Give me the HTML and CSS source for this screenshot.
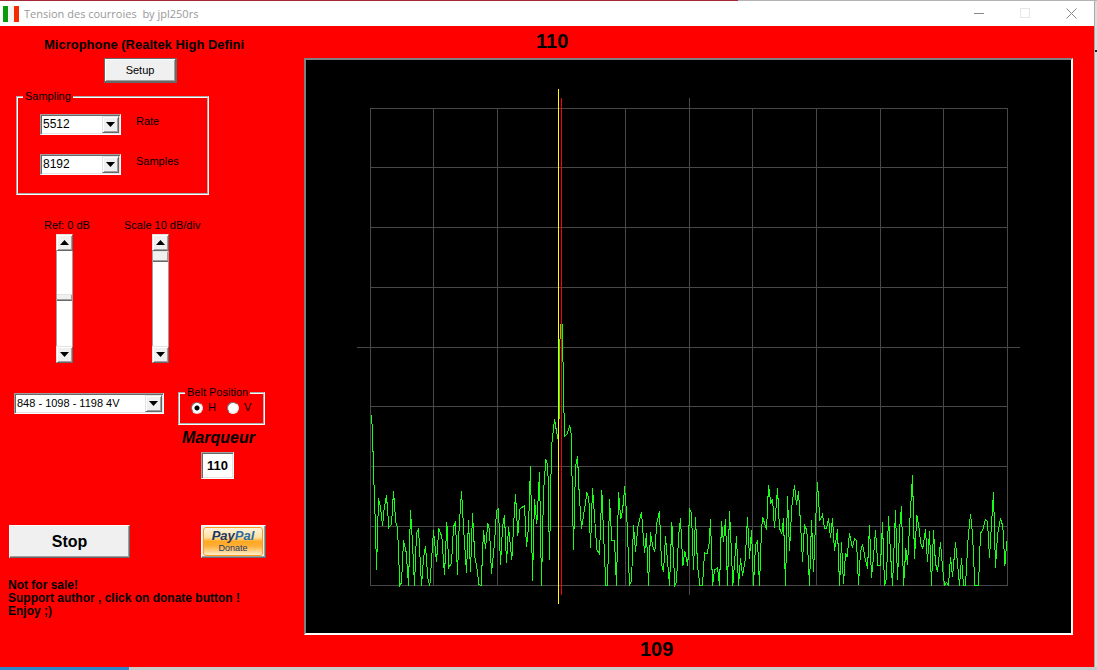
FILE: index.html
```html
<!DOCTYPE html>
<html lang="fr">
<head>
<meta charset="utf-8">
<title>Tension des courroies by jpl250rs</title>
<link rel="stylesheet" href="styles.css">
</head>
<body>
<div class="window">
  <header class="titlebar">
    <svg class="flag" viewBox="0 0 16 16" aria-hidden="true"><path fill="#0a9a0a" d="M0 0h5v16H0z"/><path fill="#f4f4f4" d="M5 0h6v16H5z"/><path fill="#f42a00" d="M11 0h5v16h-5z"/></svg>
    <h1 class="title">Tension des courroies&nbsp; by jpl250rs</h1>
    <button class="winbtn" type="button" aria-label="Minimize"><svg viewBox="0 0 11 11"><path d="M0 5.500h10"/></svg></button>
    <button class="winbtn winbtn-off" type="button" aria-label="Maximize" disabled><svg viewBox="0 0 11 11"><path d="M.5.5h9v9h-9z"/></svg></button>
    <button class="winbtn" type="button" aria-label="Close"><svg viewBox="0 0 11 11"><path shape-rendering="auto" d="M.5.5l10 10M10.500.5l-10 10"/></svg></button>
  </header>
  <main class="main">
    <section class="sidebar">
      <h2 class="device">Microphone (Realtek High Defini</h2>
      <button class="btn setup" type="button">Setup</button>
      <fieldset class="group sampling">
        <legend>Sampling</legend>
        <div class="row">
          <span class="combo combo-small"><select id="rate"><option>5512</option></select><span class="drop"></span></span>
          <label for="rate">Rate</label>
        </div>
        <div class="row">
          <span class="combo combo-small"><select id="samples"><option>8192</option></select><span class="drop"></span></span>
          <label for="samples">Samples</label>
        </div>
      </fieldset>
      <div class="sliders">
        <div class="slider slider-ref">
          <label for="ref">Ref: 0 dB</label>
          <div class="scroll">
            <button class="arrow arrow-up" type="button" aria-label="Raise reference"></button>
            <input id="ref" type="range" min="0" max="100" value="49">
            <button class="arrow arrow-down" type="button" aria-label="Lower reference"></button>
          </div>
        </div>
        <div class="slider slider-scale">
          <label for="scale">Scale 10 dB/div</label>
          <div class="scroll">
            <button class="arrow arrow-up" type="button" aria-label="Raise scale"></button>
            <input id="scale" type="range" min="0" max="100" value="0">
            <button class="arrow arrow-down" type="button" aria-label="Lower scale"></button>
          </div>
        </div>
      </div>
      <div class="belt">
        <span class="combo combo-model"><select aria-label="Model"><option>848 - 1098 - 1198 4V</option></select><span class="drop"></span></span>
        <div class="belt-side">
          <fieldset class="group position">
            <legend>Belt Position</legend>
            <div class="choices">
              <label><input type="radio" name="pos" checked>H</label>
              <label><input type="radio" name="pos">V</label>
            </div>
          </fieldset>
          <label class="marker-label" for="marker">Marqueur</label>
          <input class="marker" id="marker" type="text" value="110">
        </div>
      </div>
      <div class="actions">
        <button class="btn stop" type="button">Stop</button>
        <button class="btn donate" type="button"><span class="donate-face"><span class="paypal"><b>Pay</b><b class="pal">Pal</b></span><span class="donate-text">Donate</span></span></button>
      </div>
      <p class="note">Not for sale!<br>Support author , click on donate button !<br>Enjoy ;)</p>
    </section>
    <section class="plot">
      <output class="reading reading-top">110</output>
      <svg class="chart" viewBox="306 60 765 573" preserveAspectRatio="none" role="img" aria-label="Frequency spectrum">
        <g class="grid">
          <path d="M370.500 108.500H1007.500V585.500H370.500zM370.500 167.500H1007.500M370.500 227.500H1007.500M370.500 287.500H1007.500M357 347.500H1020M370.500 406.500H1007.500M370.500 466.500H1007.500M370.500 526.500H1007.500"/>
          <path d="M433.500 108V585M497.500 108V585M625.500 108V585M689.500 98V595M752.500 108V585M816.500 108V585M880.500 108V585M943.500 108V585"/>
        </g>
        <g class="trace">
          <polyline transform="translate(360.170 400.170) scale(.33333)" points="34,45 37,100 40,206 43,300 46,384 49,508 55,295 61,320 67,378 72,325 79,286 86,382 94,372 100,274 107,368 112,382 119,556 124,548 130,421 138,456 145,556 151,331 157,430 163,556 169,400 175,385 184,556 190,475 196,438 203,535 209,556 220,391 229,485 236,385 245,410 253,524 260,367 266,502 274,488 280,380 286,364 292,524 297,380 304,274 311,395 319,517 325,361 331,515 337,340 344,470 350,502 356,552 363,556 370,391 376,446 383,370 388,389 394,520 403,430 409,331 415,325 421,494 427,382 433,346 439,488 445,382 455,479 461,362 466,283"/>
          <polyline transform="translate(515.170 310.170) scale(.33333)" points="1,553 8,677 14,597 28,586 34,710 40,650 46,468 52,812 58,568 65,641 73,486 79,826 85,546 92,447 98,468 103,748 109,408 118,328 128,387 133,303 133,130 136,43 142,43 143,126 146,294 149,378 155,372 164,346 169,378 170,470 175,719 181,470 187,438 192,548 199,656 208,597 215,549 221,562 226,713 232,535 238,618 245,719 253,731 260,541 266,690 272,826 277,826 283,568 290,690 298,692 304,826 310,547 317,626 322,602 329,529"/>
          <polyline transform="translate(620.170 460.170) scale(.33333)" points="13,79 20,170 28,376 34,362 40,196 46,275 53,200 64,156 73,278 79,220 85,376 91,217 97,255 104,275 110,187 118,154 124,310 130,335 136,229 148,376 155,187 164,376 169,366 175,230 181,175 188,317 194,274 203,317 208,145 214,160 220,328 226,172 232,315 239,376 247,376 253,278 261,280 267,250 271,178 277,376 283,330 292,322 298,376 304,184 310,245 316,178 322,376 328,154 334,280 338,376 349,229 355,376 361,295 367,346 375,300 382,172 388,295 394,211 400,376 406,255 412,241 418,376 424,206 428,172 439,209 445,76"/>
          <polyline transform="translate(750.170 460.170) scale(.33333)" points="55,76 62,128 67,116 73,203 82,85 88,205 95,220 100,175 106,376 112,109 118,272 125,140 133,76 139,133 145,94 151,190 157,304 163,193 170,212 178,376 184,181 190,335 196,190 202,67 209,182 217,163 223,206 229,206 235,175 241,233 247,175 253,272 262,208 268,376 274,247 280,371 286,278 291,290 298,220 307,263 313,235 319,241 325,374 331,275 337,253 345,295 352,325 358,196 364,352 370,290 376,211 383,316 391,316 397,187 403,376"/>
          <polyline transform="translate(880.170 460.170) scale(.33333)" points="13,376 19,353 25,169 31,280 37,376 46,151 52,359 58,210 64,139 70,376 77,265 82,314 88,200 97,46 103,296 110,166 116,200 122,250 128,265 136,208 142,305 148,214 154,376 160,211 166,310 172,334 181,247 187,320 193,376 199,367 205,376 211,292 217,350 226,247 232,310 238,376 244,295 250,376 256,376 264,230 271,163 277,220 284,376 295,376 301,220 309,205 316,178 322,185 328,293 334,190 340,97 346,323 352,225 361,175 368,198 374,317 380,243"/>
        </g>
        <path class="peak" d="M561.500 98V595"/>
        <path class="cursor" d="M558.500 89V604"/>
      </svg>
      <output class="reading reading-bottom">109</output>
    </section>
  </main>
</div>
</body>
</html>
```
FILE: styles.css
```css
* { box-sizing: border-box; }
body {
  margin: 0;
  height: 100vh;
  padding: 1px 3px 3px 0;
  overflow: hidden;
  font: 11px/13px "Liberation Sans", Arial, sans-serif;
  color: #000;
  background:
    linear-gradient(#222, #222) right 50px / 3px 2px no-repeat,
    linear-gradient(90deg, #a52a35 738px, #b4b4b4 0) top / 100% 1px no-repeat,
    linear-gradient(90deg, #2f86c8 129px, #c9c9c9 0) bottom / 100% 3px no-repeat,
    #dcdcdc;
}
button, input, select { font: inherit; color: inherit; margin: 0; }
.window {
  height: 100%;
  display: flex;
  flex-direction: column;
  background: #f00;
  box-shadow: 1px 0 #aaa;
}
.titlebar {
  flex: none;
  height: 25px;
  display: flex;
  align-items: center;
  background: #fff;
}
.flag { width: 16px; height: 16px; margin: 0 5px 0 3px; }
.title { flex: 1; margin: 0; font: 11px/16px "Open Sans", "Noto Sans", sans-serif; color: #999; }
.winbtn { width: 46px; height: 25px; padding: 0; border: 0; background: none; display: grid; place-items: center; }
.winbtn svg { width: 11px; height: 11px; fill: none; stroke: #888; shape-rendering: crispEdges; }
.winbtn-off svg { stroke: #e6e6e6; }

.main { flex: 1; min-height: 0; display: flex; }
.sidebar { flex: none; width: 304px; padding-top: 10px; }
.device { margin: 0 0 4px 44px; font-size: 13px; line-height: 18px; white-space: nowrap; }
.btn {
  padding: 0;
  background: #f0f0f0;
  border: 1px solid;
  border-color: #fff #696969 #696969 #fff;
  box-shadow: inset -1px -1px #a0a0a0;
}
.setup { display: block; width: 73px; height: 25px; margin-left: 104px; border-width: 1px 2px 2px 1px; border-color: #696969; box-shadow: inset 1px 1px #fff, inset -1px -1px #a0a0a0; }

.group { margin: 0; padding: 0; border: 2px groove #fff; min-width: 0; }
.group legend { margin-left: 5px; padding: 0 2px; line-height: 13px; }
.sampling { width: 193px; height: 105px; margin: 7px 0 0 16px; }
.row { display: flex; gap: 15px; height: 40px; align-items: flex-start; padding-left: 22px; }
.row label { padding-top: 1px; }
.sampling legend + .row { margin-top: 11px; }

.combo { position: relative; display: block; height: 21px; background: #fff; border: 1px solid; border-color: #a0a0a0 #fff #fff #a0a0a0; box-shadow: inset 1px 1px #696969, inset -1px -1px #e3e3e3; }
.combo select { display: block; width: 100%; height: 18px; padding: 0 18px 0 2px; border: 0; background: none; appearance: none; font-size: 12px; }
.combo-small { width: 81px; }
.combo-model { width: 150px; margin-top: 7px; }
.combo-model select { font-size: 11px; }
.drop, .arrow {
  background: #f0f0f0;
  border: 1px solid;
  border-color: #e3e3e3 #696969 #696969 #e3e3e3;
  box-shadow: inset 1px 1px #fff, inset -1px -1px #a0a0a0;
  display: grid;
  place-items: center;
}
.drop { position: absolute; top: 1px; right: 1px; width: 17px; height: 17px; pointer-events: none; }
.drop::after, .arrow::after { content: ""; width: 9px; height: 5px; background: #000; clip-path: polygon(0 0, 100% 0, 50% 100%); }
.arrow-up::after { clip-path: polygon(0 100%, 100% 100%, 50% 0); }

.sliders { display: flex; margin-top: 24px; padding-left: 44px; white-space: nowrap; }
.slider-ref { width: 80px; }
.slider label { display: block; margin-bottom: 2px; }
.scroll { width: 17px; display: flex; flex-direction: column; }
.slider-ref .scroll { margin-left: 12px; }
.slider-scale .scroll { margin-left: 28px; }
.arrow { width: 17px; height: 17px; padding: 0; }
.scroll input { appearance: none; writing-mode: vertical-lr; width: 17px; height: 95px; background: #fff; border: 1px solid; border-color: transparent #a0a0a0; border-width: 0 1px; }
.scroll input::-webkit-slider-thumb {
  appearance: none;
  width: 15px;
  height: 7px;
  background: #f0f0f0;
  border-bottom: 1px solid #696969;
  box-shadow: inset 0 1px #e3e3e3, inset -1px -1px #a0a0a0;
}
#scale::-webkit-slider-thumb { height: 11px; }

.belt { display: flex; gap: 14px; margin-top: 23px; padding-left: 14px; align-items: flex-start; }
.belt-side { width: 87px; display: flex; flex-direction: column; }
.position { height: 39px; }
.choices { display: flex; padding: 2px 0 0 11px; gap: 11px; }
.position label { display: flex; align-items: center; gap: 5px; height: 13px; }
.position input { appearance: none; width: 12px; height: 12px; border: 1px solid; border-color: #777 #e3e3e3 #e3e3e3 #777; border-radius: 50%; background: #fff; }
.position input:checked { background: radial-gradient(circle, #000 2px, #fff 3px); }
.marker-label { margin: 4px 0 5px 4px; font: italic bold 16px/18px "Liberation Sans", Arial, sans-serif; }
.marker { width: 33px; height: 27px; margin-left: 23px; padding: 0; text-align: center; font-weight: bold; font-size: 13px; background: #fff; border: 1px solid; border-color: #a0a0a0 #fff #fff #a0a0a0; box-shadow: inset 1px 1px #696969, inset -1px -1px #e3e3e3; }

.actions { display: flex; gap: 71px; margin: 46px 0 0 9px; }
.stop { width: 121px; height: 33px; font-size: 16px; font-weight: bold; }
.donate { width: 65px; height: 33px; }
.donate-face { display: flex; flex-direction: column; align-items: center; margin: 1px 2px 2px 1px; height: 29px; border: 1px solid #ff9a1c; border-radius: 3px; background: linear-gradient(#fff4dc, #ffe0a0 35%, #ffa822 50%, #ffb03a 68%, #fff0cc); }
.paypal { font: italic bold 13px/15px "Liberation Sans", Arial, sans-serif; color: #1c3664; }
.pal { color: #2a6ba5; }
.donate-text { font: 9px/11px "Liberation Sans", Arial, sans-serif; color: #1c3664; }
.note { margin: 21px 0 0 8px; font-size: 12px; font-weight: bold; line-height: 13px; white-space: nowrap; }

.plot { flex: 1; min-width: 0; margin-right: 21px; display: flex; flex-direction: column; }
.reading { flex: none; height: 32px; font-size: 20px; font-weight: bold; line-height: 30px; }
.reading-top { padding-left: 232px; }
.reading-bottom { padding-left: 336px; line-height: 28px; }
.chart { flex: 1; min-height: 0; width: 100%; background: #000; border: 2px solid; border-color: #808080 #fff #fff #808080; }
.chart path, .chart polyline { fill: none; stroke-width: 1; vector-effect: non-scaling-stroke; shape-rendering: crispEdges; }
.grid { stroke: #484848; }
.trace { stroke: #16ff16; }
.chart .peak { stroke: #f00; }
.cursor { stroke: #ff0; }
```
